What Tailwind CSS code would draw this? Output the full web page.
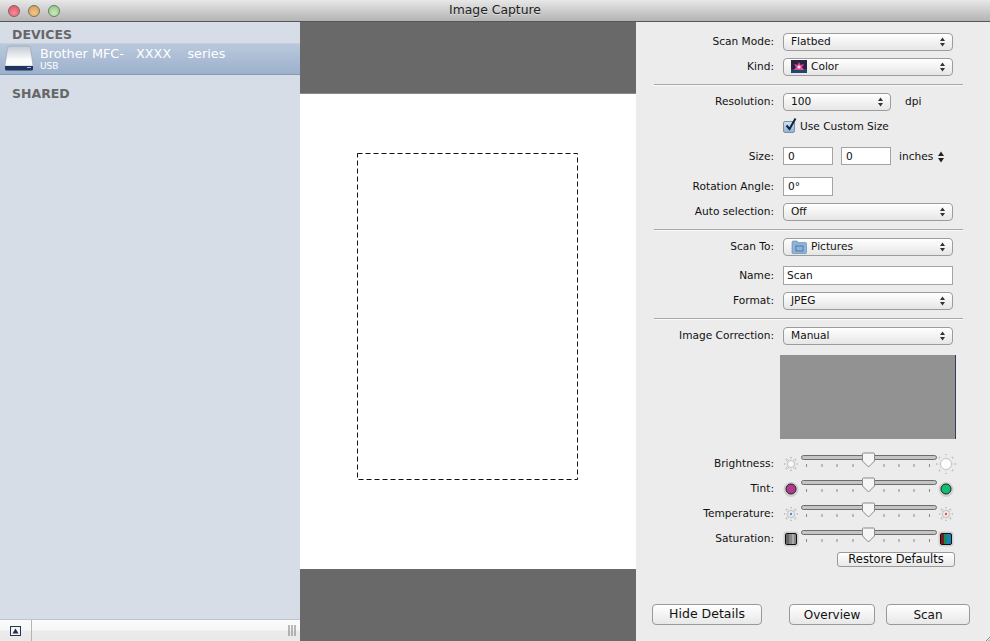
<!DOCTYPE html>
<html>
<head>
<meta charset="utf-8">
<script src="https://cdn.jsdelivr.net/npm/@tailwindcss/browser@4"></script>
</head>
<body class="m-0 overflow-hidden">
<div class="relative w-[990px] h-[641px] flex flex-col bg-[#ececec] font-['DejaVu_Sans',sans-serif] text-[10.6px] text-[#111]">
  <!-- title bar -->
  <div class="relative h-[22px] shrink-0 flex items-center justify-center bg-gradient-to-b from-[#e8e8e8] to-[#b4b4b4] border-b border-[#565656]">
    <div class="absolute left-[8px] top-[5px] flex gap-[8px]">
      <div class="w-[12px] h-[12px] rounded-full border border-[#7d6468] bg-[radial-gradient(circle_at_50%_70%,#f98a98,#e0505f)]"></div>
      <div class="w-[12px] h-[12px] rounded-full border border-[#7f7058] bg-[radial-gradient(circle_at_50%_70%,#f2c787,#cf9a58)]"></div>
      <div class="w-[12px] h-[12px] rounded-full border border-[#667f62] bg-[radial-gradient(circle_at_50%_70%,#c6ecb8,#8fc184)]"></div>
    </div>
    <span class="text-[12.4px] text-[#222] [text-shadow:0_1px_0_#ddd]">Image Capture</span>
  </div>
  <div class="flex flex-1 min-h-0">
    <!-- sidebar -->
    <div class="w-[300px] shrink-0 flex flex-col bg-[#d6dde6]">
      <div class="h-[21px] pl-[12px] pt-[5px] font-bold text-[12.5px] leading-[15px] text-[#666]">DEVICES</div>
      <div class="h-[32px] flex items-center pl-[5px] bg-gradient-to-b from-[#b9c8dc] to-[#9db1cc] border-t border-[#c4cfde] border-b border-b-[#7d9cc0]">
        <svg width="28" height="28" viewBox="0 0 28 28" class="shrink-0">
          <defs><linearGradient id="drive" x1="0" y1="0" x2="0" y2="1"><stop offset="0" stop-color="#c3c9d1"/><stop offset="0.7" stop-color="#fbfcfc"/></linearGradient></defs>
          <path d="M5 1 H23 Q25 1 25.500 3 L28 21 H0 L2.500 3 Q3 1 5 1Z" fill="url(#drive)" stroke="#8c97a6" stroke-width="0.500"/>
          <path d="M0 21 H28 V24 Q28 25.500 26.500 25.500 H1.500 Q0 25.500 0 24Z" fill="#1f3560"/>
          <rect x="22" y="22" width="4" height="1" fill="#a9b8d0"/>
        </svg>
        <div class="ml-[7px] flex flex-col text-white">
          <span class="text-[12.8px] leading-[15px] whitespace-pre">Brother MFC-   XXXX    series</span>
          <span class="text-[9px] leading-[11px]">USB</span>
        </div>
      </div>
      <div class="mt-[11px] pl-[12px] font-bold text-[12.5px] leading-[15px] text-[#666]">SHARED</div>
      <div class="flex-1"></div>
      <div class="h-[22px] flex border-t border-[#c0c6cf] bg-[linear-gradient(#fafbfb_0,#f6f7f7_48%,#ebebeb_52%,#e9e9e9_100%)]">
        <div class="w-[32px] h-full flex items-center justify-center border-r border-[#b5b5b5]">
          <svg width="11" height="10" viewBox="0 0 11 10">
            <rect x="0.500" y="0.500" width="10" height="9" fill="#f4f4f4" stroke="#1f3560"/>
            <path d="M5.500 2.500 L8.500 7.500 H2.500Z" fill="#2a2a3a"/>
          </svg>
        </div>
        <div class="flex-1 flex items-center justify-end pr-[4px]">
          <svg width="8" height="11" viewBox="0 0 8 11"><path d="M1 0V11M4 0V11M7 0V11" stroke="#777" fill="none"/></svg>
        </div>
      </div>
    </div>
    <!-- preview -->
    <div class="w-[336px] shrink-0 flex flex-col bg-[#696969]">
      <div class="h-[72px] border-b border-[#8a8a8a]"></div>
      <div class="h-[475px] bg-white pl-[57px] pt-[59px]">
        <svg width="221" height="327" viewBox="0 0 221 327" class="block"><rect x="0.500" y="0.500" width="220" height="326" fill="none" stroke="#111" stroke-dasharray="5 3"/></svg>
      </div>
    </div>
    <!-- details -->
    <div class="flex-1 relative pt-[11px]">
      <div class="flex items-center h-[18px]">
        <div class="w-[138px] text-right">Scan Mode:</div>
        <div class="ml-[9px] w-[170px] h-[18px] flex items-center justify-between pl-[7px] pr-[6px] rounded-[4px] border border-[#9c9c9c] bg-gradient-to-b from-white to-[#e6e6e6]">
          <span>Flatbed</span>
          <svg width="7" height="10" viewBox="0 0 7 10"><path d="M3.500 0.500L6 4H1ZM3.500 9.500L6 6H1Z" fill="#333"/></svg>
        </div>
      </div>
      <div class="mt-[7px] flex items-center h-[18px]">
        <div class="w-[138px] text-right">Kind:</div>
        <div class="ml-[9px] w-[170px] h-[18px] flex items-center justify-between pl-[7px] pr-[6px] rounded-[4px] border border-[#9c9c9c] bg-gradient-to-b from-white to-[#e6e6e6]">
          <span class="flex items-center gap-[4px]">
            <svg width="16" height="13" viewBox="0 0 16 13"><rect width="16" height="13" fill="#2a2440"/><rect y="9" width="16" height="4" fill="#25456a"/><path d="M8 2L9.500 5L13 4L11 7L13 10H3L5 7L3 4L6.500 5Z" fill="#e14a9c"/><circle cx="8" cy="7" r="1.500" fill="#f8e7ef"/></svg>
            Color
          </span>
          <svg width="7" height="10" viewBox="0 0 7 10"><path d="M3.500 0.500L6 4H1ZM3.500 9.500L6 6H1Z" fill="#333"/></svg>
        </div>
      </div>
      <div class="mt-[8px] ml-[18px] w-[309px] h-[2px] border-t border-[#a8a8a8] bg-white/70"></div>
      <div class="mt-[7px] flex items-center h-[18px]">
        <div class="w-[138px] text-right">Resolution:</div>
        <div class="ml-[9px] w-[108px] h-[18px] flex items-center justify-between pl-[7px] pr-[6px] rounded-[4px] border border-[#9c9c9c] bg-gradient-to-b from-white to-[#e6e6e6]">
          <span>100</span>
          <svg width="7" height="10" viewBox="0 0 7 10"><path d="M3.500 0.500L6 4H1ZM3.500 9.500L6 6H1Z" fill="#333"/></svg>
        </div>
        <span class="ml-[14px]">dpi</span>
      </div>
      <div class="mt-[7px] ml-[147px] flex items-center h-[18px]">
        <div class="relative w-[12px] h-[12px] rounded-[2px] border border-[#7f8fa6] bg-gradient-to-b from-[#cfe0f2] to-[#8fb4dc]">
          <svg width="14" height="15" viewBox="0 0 14 15" class="absolute left-[0px] top-[-5px]"><path d="M2.500 8.500L5.500 12L11.500 1.500" stroke="#15233a" stroke-width="2" fill="none"/></svg>
        </div>
        <span class="ml-[5px]">Use Custom Size</span>
      </div>
      <div class="mt-[11px] flex items-center h-[18px]">
        <div class="w-[138px] text-right pt-[1px]">Size:</div>
        <div class="ml-[9px] w-[50px] h-[18px] pl-[4px] leading-[16px] border border-[#a4a4a4] bg-white">0</div>
        <div class="ml-[8px] w-[50px] h-[18px] pl-[4px] leading-[16px] border border-[#a4a4a4] bg-white">0</div>
        <span class="ml-[8px] pt-[2px]">inches</span>
        <svg width="8" height="12" viewBox="0 0 8 12" class="ml-[4px] mt-[1px]"><path d="M4 0.500L7 5H1ZM4 11.500L7 7H1Z" fill="#222"/></svg>
      </div>
      <div class="mt-[12px] flex items-center h-[19px]">
        <div class="w-[138px] text-right pt-[1px]">Rotation Angle:</div>
        <div class="ml-[9px] w-[50px] h-[19px] pl-[4px] leading-[17px] border border-[#a4a4a4] bg-white">0°</div>
      </div>
      <div class="mt-[7px] flex items-center h-[18px]">
        <div class="w-[138px] text-right">Auto selection:</div>
        <div class="ml-[9px] w-[170px] h-[18px] flex items-center justify-between pl-[7px] pr-[6px] rounded-[4px] border border-[#9c9c9c] bg-gradient-to-b from-white to-[#e6e6e6]">
          <span>Off</span>
          <svg width="7" height="10" viewBox="0 0 7 10"><path d="M3.500 0.500L6 4H1ZM3.500 9.500L6 6H1Z" fill="#333"/></svg>
        </div>
      </div>
      <div class="mt-[8px] ml-[18px] w-[309px] h-[2px] border-t border-[#a8a8a8] bg-white/70"></div>
      <div class="mt-[7px] flex items-center h-[18px]">
        <div class="w-[138px] text-right">Scan To:</div>
        <div class="ml-[9px] w-[170px] h-[18px] flex items-center justify-between pl-[7px] pr-[6px] rounded-[4px] border border-[#9c9c9c] bg-gradient-to-b from-white to-[#e6e6e6]">
          <span class="flex items-center gap-[4px]">
            <svg width="16" height="14" viewBox="0 0 16 14"><path d="M1 2.500Q1 1 2 1H6L7 2.500H14.500Q15.500 2.500 15.500 3.500V12.500Q15.500 13.500 14.500 13.500H2Q1 13.500 1 12.500Z" fill="#8db4d8" stroke="#5f86ac" stroke-width="0.600"/><rect x="5" y="6" width="7" height="5" fill="none" stroke="#4f7aa4"/></svg>
            Pictures
          </span>
          <svg width="7" height="10" viewBox="0 0 7 10"><path d="M3.500 0.500L6 4H1ZM3.500 9.500L6 6H1Z" fill="#333"/></svg>
        </div>
      </div>
      <div class="mt-[10px] flex items-center h-[19px]">
        <div class="w-[138px] text-right pt-[1px]">Name:</div>
        <div class="ml-[9px] w-[170px] h-[19px] pl-[3px] leading-[17px] border border-[#a4a4a4] bg-white">Scan</div>
      </div>
      <div class="mt-[7px] flex items-center h-[18px]">
        <div class="w-[138px] text-right">Format:</div>
        <div class="ml-[9px] w-[170px] h-[18px] flex items-center justify-between pl-[7px] pr-[6px] rounded-[4px] border border-[#9c9c9c] bg-gradient-to-b from-white to-[#e6e6e6]">
          <span>JPEG</span>
          <svg width="7" height="10" viewBox="0 0 7 10"><path d="M3.500 0.500L6 4H1ZM3.500 9.500L6 6H1Z" fill="#333"/></svg>
        </div>
      </div>
      <div class="mt-[8px] ml-[18px] w-[309px] h-[2px] border-t border-[#a8a8a8] bg-white/70"></div>
      <div class="mt-[7px] flex items-center h-[18px]">
        <div class="w-[138px] text-right">Image Correction:</div>
        <div class="ml-[9px] w-[170px] h-[18px] flex items-center justify-between pl-[7px] pr-[6px] rounded-[4px] border border-[#9c9c9c] bg-gradient-to-b from-white to-[#e6e6e6]">
          <span>Manual</span>
          <svg width="7" height="10" viewBox="0 0 7 10"><path d="M3.500 0.500L6 4H1ZM3.500 9.500L6 6H1Z" fill="#333"/></svg>
        </div>
      </div>
      <div class="mt-[10px] ml-[144px] w-[176px] h-[84px] bg-[#929292] border-r border-[#34405a]"></div>
      <!-- sliders -->
      <div class="mt-[12px] flex items-center h-[25px]">
        <div class="w-[138px] text-right">Brightness:</div>
        <svg width="178" height="25" viewBox="0 0 178 25" class="ml-[8px] shrink-0 mt-[1px]">
          <g stroke="#c4c4c4" stroke-width="2"><path d="M9 5V19M2 12H16M4 7L14 17M14 7L4 17"/></g><g stroke="#fff"><path d="M9 6V18M3 12H15M5 8L13 16M13 8L5 16"/></g><circle cx="9" cy="12" r="3.500" fill="#f8f8f8" stroke="#c4c4c4"/>
          <rect x="19.500" y="3.500" width="135" height="4" rx="2" fill="#c4c4c4" stroke="#6c6c6c"/>
          <path d="M24.500 12v3M40 12v3M55 12v3M71 12v3M86.500 12v3M102 12v3M117 12v3M132 12v3M147.500 12v3" stroke="#888"/>
          <path d="M80.500 1.500Q80.500 1 81.500 1H91.500Q92.500 1 92.500 2V9L86.500 15L80.500 9Z" fill="#f5f5f5" stroke="#8a8a8a"/>
          <g stroke="#c4c4c4" stroke-width="2"><path d="M164 2V22M154 12H174M157 5L171 19M171 5L157 19"/></g><g stroke="#fff" stroke-width="1.200"><path d="M164 3V21M155 12H173M158 6L170 18M170 6L158 18"/></g><circle cx="164" cy="12" r="5.500" fill="#fff" stroke="#c4c4c4"/>
        </svg>
      </div>
      <div class="flex items-center h-[25px]">
        <div class="w-[138px] text-right">Tint:</div>
        <svg width="178" height="25" viewBox="0 0 178 25" class="ml-[8px] shrink-0 mt-[1px]">
          <circle cx="9" cy="12.500" r="7.500" fill="#bdbdbd" opacity="0.600"/><circle cx="9" cy="12" r="5" fill="#b03a90" stroke="#222"/>
          <rect x="19.500" y="3.500" width="135" height="4" rx="2" fill="#c4c4c4" stroke="#6c6c6c"/>
          <path d="M24.500 12v3M40 12v3M55 12v3M71 12v3M86.500 12v3M102 12v3M117 12v3M132 12v3M147.500 12v3" stroke="#888"/>
          <path d="M80.500 1.500Q80.500 1 81.500 1H91.500Q92.500 1 92.500 2V9L86.500 15L80.500 9Z" fill="#f5f5f5" stroke="#8a8a8a"/>
          <circle cx="164" cy="12.500" r="7.500" fill="#bdbdbd" opacity="0.600"/><circle cx="164" cy="12" r="5" fill="#10c070" stroke="#222"/>
        </svg>
      </div>
      <div class="flex items-center h-[25px]">
        <div class="w-[138px] text-right">Temperature:</div>
        <svg width="178" height="25" viewBox="0 0 178 25" class="ml-[8px] shrink-0 mt-[1px]">
          <g stroke="#c4c4c4" stroke-width="2"><path d="M9 5V19M2 12H16M4 7L14 17M14 7L4 17"/></g><g stroke="#fff"><path d="M9 6V18M3 12H15M5 8L13 16M13 8L5 16"/></g><circle cx="9" cy="12" r="3.500" fill="#eee" stroke="#c4c4c4"/><circle cx="9" cy="12" r="1.200" fill="#4a8ad0"/>
          <rect x="19.500" y="3.500" width="135" height="4" rx="2" fill="#c4c4c4" stroke="#6c6c6c"/>
          <path d="M24.500 12v3M40 12v3M55 12v3M71 12v3M86.500 12v3M102 12v3M117 12v3M132 12v3M147.500 12v3" stroke="#888"/>
          <path d="M80.500 1.500Q80.500 1 81.500 1H91.500Q92.500 1 92.500 2V9L86.500 15L80.500 9Z" fill="#f5f5f5" stroke="#8a8a8a"/>
          <g stroke="#c4c4c4" stroke-width="2"><path d="M164 5V19M157 12H171M159 7L169 17M169 7L159 17"/></g><g stroke="#fff"><path d="M164 6V18M158 12H170M160 8L168 16M168 8L160 16"/></g><circle cx="164" cy="12" r="3.500" fill="#eee" stroke="#c4c4c4"/><circle cx="164" cy="12" r="1.200" fill="#e05050"/>
        </svg>
      </div>
      <div class="flex items-center h-[25px]">
        <div class="w-[138px] text-right">Saturation:</div>
        <svg width="178" height="25" viewBox="0 0 178 25" class="ml-[8px] shrink-0 mt-[1px]">
          <rect x="1.500" y="4.500" width="15" height="15" rx="3" fill="#bdbdbd" opacity="0.600"/><rect x="3.500" y="6.500" width="11" height="11" rx="1.500" fill="#888" stroke="#111"/><rect x="4" y="7" width="3" height="10" fill="#666"/><rect x="10" y="7" width="2" height="10" fill="#aaa"/>
          <rect x="19.500" y="3.500" width="135" height="4" rx="2" fill="#c4c4c4" stroke="#6c6c6c"/>
          <path d="M24.500 12v3M40 12v3M55 12v3M71 12v3M86.500 12v3M102 12v3M117 12v3M132 12v3M147.500 12v3" stroke="#888"/>
          <path d="M80.500 1.500Q80.500 1 81.500 1H91.500Q92.500 1 92.500 2V9L86.500 15L80.500 9Z" fill="#f5f5f5" stroke="#8a8a8a"/>
          <rect x="156.500" y="4.500" width="15" height="15" rx="3" fill="#bdbdbd" opacity="0.600"/><rect x="158.500" y="6.500" width="11" height="11" rx="1.500" fill="#1a7fc0" stroke="#111"/><rect x="159" y="7" width="3" height="10" fill="#7a1a20"/><rect x="162" y="7" width="3" height="10" fill="#1a8a50"/>
        </svg>
      </div>
      <div class="absolute left-[201px] top-[530px] w-[118px] h-[15px] flex items-center justify-center rounded-[3px] border border-[#999] bg-gradient-to-b from-white to-[#e8e8e8] text-[11.5px]">Restore Defaults</div>
      <!-- bottom buttons -->
      <div class="absolute left-[16px] top-[582px] w-[318px] flex">
        <div class="w-[110px] h-[21px] flex items-center justify-center rounded-[4px] border border-[#999] bg-gradient-to-b from-white to-[#e8e8e8] text-[12.5px]">Hide Details</div>
        <div class="ml-[27px] w-[86px] h-[21px] flex items-center justify-center rounded-[4px] border border-[#999] bg-gradient-to-b from-white to-[#e8e8e8] text-[12px]">Overview</div>
        <div class="ml-[11px] w-[84px] h-[21px] flex items-center justify-center rounded-[4px] border border-[#999] bg-gradient-to-b from-white to-[#e8e8e8] text-[12px]">Scan</div>
      </div>
      <svg width="5" height="5" viewBox="0 0 5 5" class="absolute right-0 bottom-0"><path d="M1 5L5 1M3.500 5L5 3.500" stroke="#888"/></svg>
    </div>
  </div>
</div>
</body>
</html>
